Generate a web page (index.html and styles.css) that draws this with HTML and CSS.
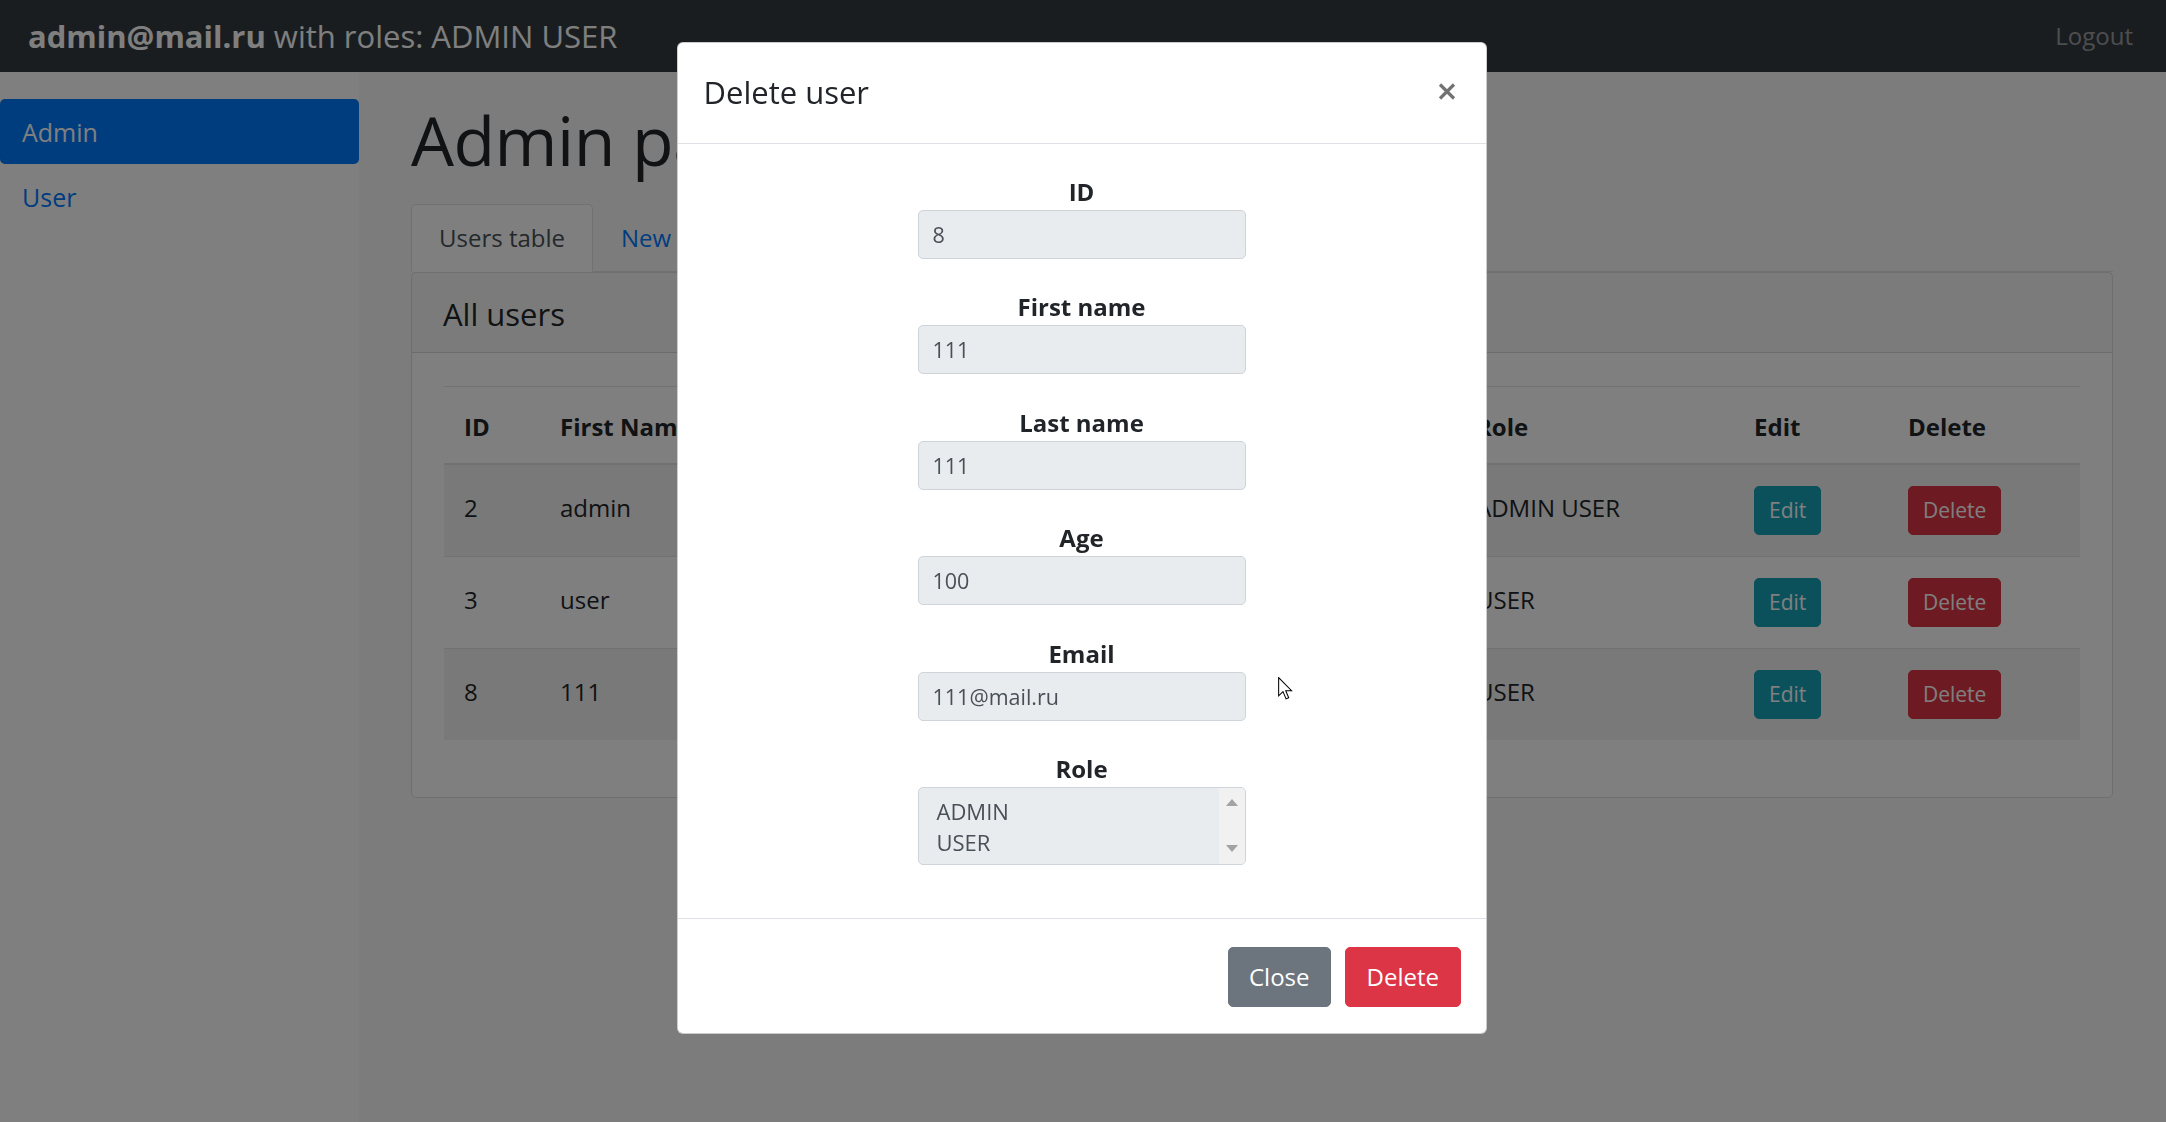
FILE: index.html
```html
<!DOCTYPE html>
<html lang="en">
<head>
<meta charset="utf-8">
<title>Admin panel</title>
<link rel="stylesheet" href="styles.css">
</head>
<body>
<nav class="topbar">
  <span class="brand"><b>admin@mail.ru</b> with roles: ADMIN USER</span>
  <a class="logout" href="#">Logout</a>
</nav>
<div class="layout">
  <aside class="sidebar">
    <a class="pill active" href="#">Admin</a>
    <a class="pill" href="#">User</a>
  </aside>
  <main class="main">
    <h1 class="page-title">Admin panel</h1>
    <div class="tabs">
      <a class="tab active" href="#">Users table</a>
      <a class="tab" href="#">New User</a>
    </div>
    <section class="card">
      <div class="card-header"><h4 class="card-title">All users</h4></div>
      <div class="card-body">
        <table class="users">
          <colgroup>
            <col class="c-id"><col class="c-first"><col class="c-last"><col class="c-age"><col class="c-email"><col class="c-role"><col class="c-edit"><col class="c-del">
          </colgroup>
          <thead>
            <tr><th>ID</th><th>First Name</th><th></th><th></th><th></th><th>Role</th><th>Edit</th><th>Delete</th></tr>
          </thead>
          <tbody>
            <tr><td>2</td><td>admin</td><td></td><td></td><td></td><td>ADMIN USER</td><td class="btn-cell"><button class="sbtn info">Edit</button></td><td class="btn-cell"><button class="sbtn danger">Delete</button></td></tr>
            <tr><td>3</td><td>user</td><td></td><td></td><td></td><td>USER</td><td class="btn-cell"><button class="sbtn info">Edit</button></td><td class="btn-cell"><button class="sbtn danger">Delete</button></td></tr>
            <tr><td>8</td><td>111</td><td></td><td></td><td></td><td>USER</td><td class="btn-cell"><button class="sbtn info">Edit</button></td><td class="btn-cell"><button class="sbtn danger">Delete</button></td></tr>
          </tbody>
        </table>
      </div>
    </section>
  </main>
</div>

<div class="backdrop"></div>

<div class="modal-wrap">
  <div class="modal">
    <div class="modal-header">
      <h5 class="modal-title">Delete user</h5>
      <button class="close" aria-label="Close">
        <svg width="18" height="17" viewBox="0 0 18 17"><path d="M2 1.5 L16 15.5 M16 1.5 L2 15.5" stroke="#000" stroke-width="3.2" fill="none"/></svg>
      </button>
    </div>
    <div class="modal-body">
      <div class="field"><label>ID</label><input class="form-control" value="8" readonly></div>
      <div class="field"><label>First name</label><input class="form-control" value="111" readonly></div>
      <div class="field"><label>Last name</label><input class="form-control" value="111" readonly></div>
      <div class="field"><label>Age</label><input class="form-control" value="100" readonly></div>
      <div class="field"><label>Email</label><input class="form-control" value="111@mail.ru" readonly></div>
      <div class="field"><label>Role</label>
        <div class="listbox" role="listbox">
          <div class="opts"><div role="option">ADMIN</div><div role="option">USER</div></div>
          <div class="scroll"><span class="arrow-up"></span><span class="arrow-down"></span></div>
        </div>
      </div>
    </div>
    <div class="modal-footer">
      <button class="btn secondary">Close</button>
      <button class="btn danger">Delete</button>
    </div>
  </div>
</div>

<svg class="cursor" width="15" height="24" viewBox="0 0 13 21"><path d="M0.5 0.5 L0.5 16.5 L4.3 12.8 L7 19.2 L9.3 18.2 L6.7 12 L11.8 12 Z" fill="#fff" stroke="#000" stroke-width="0.9" stroke-linejoin="miter"/></svg>
</body>
</html>
```
FILE: styles.css
```css
* { box-sizing: border-box; }
html, body { margin: 0; height: 100%; }
body {
  font-family: "Open Sans", "Noto Sans", sans-serif;
  font-size: 24px;
  line-height: 1.5;
  color: #212529;
  background: #fff;
  overflow: hidden;
}

/* top bar */
.topbar {
  height: 72px;
  background: #343a40;
  display: flex;
  align-items: center;
  justify-content: space-between;
  padding: 0 33px 0 28px;
}
.brand { color: #fff; font-size: 31px; white-space: nowrap; }
.brand b { font-weight: 700; }
.logout { color: rgba(255,255,255,.5); font-size: 24px; text-decoration: none; }

/* layout */
.layout { display: flex; height: calc(100% - 72px); }
.sidebar {
  width: 359px;
  flex: none;
  background: #fff;
  padding-top: 27px;
  display: flex;
  flex-direction: column;
}
.pill {
  display: block;
  padding: 16px 22px 14px;
  font-size: 25px;
  line-height: 35px;
  color: #007bff;
  text-decoration: none;
  border-radius: 5px;
}
.pill.active { background: #007bff; color: #fff; }

.main { flex: 1; background: #f8f9fa; padding: 27px 53px 0 52px; }
.page-title { margin: 0 0 23px; font-size: 68px; font-weight: 400; line-height: 1.2; letter-spacing: -0.5px; }

.tabs { display: flex; border-bottom: 1px solid #dee2e6; }
.tab {
  padding: 15px 27px;
  line-height: 36px;
  border: 1px solid transparent;
  border-radius: 5px 5px 0 0;
  margin-bottom: -1px;
  color: #007bff;
  text-decoration: none;
}
.tab.active { color: #495057; background: #fff; border-color: #dee2e6 #dee2e6 #fff; }

.card { border: 1px solid rgba(0,0,0,.125); border-radius: 5px; background: #fff; }
.card-header {
  padding: 23px 31px 20px;
  background: rgba(0,0,0,.03);
  border-bottom: 1px solid rgba(0,0,0,.125);
}
.card-title { margin: 0; font-size: 31px; font-weight: 400; line-height: 36px; }
.card-body { padding: 33px 32px; }

.users { width: 100%; table-layout: fixed; border-collapse: collapse; margin-bottom: 24px; }
.c-id { width: 96px; } .c-first { width: 220px; } .c-last { width: 230px; } .c-age { width: 120px; }
.c-email { width: 346px; } .c-role { width: 278px; } .c-edit { width: 154px; } .c-del { width: 192px; }
.users th, .users td {
  text-align: left;
  vertical-align: top;
  border-top: 1px solid #dee2e6;
  line-height: 36px;
  white-space: nowrap;
}
.users thead th { padding: 22px 20px 18px; border-bottom: 2px solid #dee2e6; font-weight: 700; }
.users tbody td { padding: 25px 20px 17px; }
.users tbody td.btn-cell { padding: 21px 20px; }
.users tbody tr:nth-child(odd) { background: rgba(0,0,0,.05); }

.sbtn {
  display: inline-block;
  vertical-align: top;
  height: 49px;
  padding: 0 14px;
  font-family: "Open Sans", sans-serif;
  font-size: 21px;
  color: #fff;
  border: 1px solid;
  border-radius: 5px;
}
.sbtn.info { background: #17a2b8; border-color: #17a2b8; }
.sbtn.danger { background: #dc3545; border-color: #dc3545; }

/* modal */
.backdrop { position: fixed; inset: 0; background: rgba(0,0,0,.5); }
.modal-wrap {
  position: fixed;
  inset: 0;
  display: flex;
  justify-content: center;
  align-items: flex-start;
  padding: 42px 3px 0 0;
}
.modal {
  width: 810px;
  background: #fff;
  border: 1px solid rgba(0,0,0,.2);
  border-radius: 6px;
}
.modal-header {
  height: 101px;
  display: flex;
  align-items: center;
  justify-content: space-between;
  padding: 0 30px 0 26px;
  border-bottom: 1px solid #dee2e6;
}
.modal-title { margin: 0; font-size: 31px; font-weight: 400; line-height: 1.2; }
.close {
  background: none;
  border: 0;
  padding: 0;
  margin-bottom: 3px;
  opacity: .55;
  display: flex;
}
.modal-body {
  padding: 30px 0 53px;
  display: flex;
  flex-direction: column;
  align-items: center;
  gap: 30.4px;
}
.field { display: flex; flex-direction: column; align-items: center; }
.field label { font-weight: 700; font-size: 24px; line-height: 36px; }
.form-control {
  width: 328px;
  height: 49px;
  padding: 0 14px;
  font-family: "Open Sans", sans-serif;
  font-size: 21.5px;
  color: #495057;
  background: #e9ecef;
  border: 1px solid #ced4da;
  border-radius: 5px;
  outline: none;
}
.listbox {
  width: 328px;
  height: 78px;
  display: flex;
  background: #e9ecef;
  border: 1px solid #ced4da;
  border-radius: 5px;
  overflow: hidden;
}
.opts { flex: 1; padding: 8px 18px; font-size: 22px; line-height: 31px; color: #495057; }
.scroll {
  width: 26px;
  background: #f1f1f1;
  display: flex;
  flex-direction: column;
  justify-content: space-between;
  align-items: center;
  padding: 11px 0 11.5px;
}
.arrow-up { width: 0; height: 0; border-left: 6px solid transparent; border-right: 6px solid transparent; border-bottom: 7px solid #a3a3a3; }
.arrow-down { width: 0; height: 0; border-left: 6px solid transparent; border-right: 6px solid transparent; border-top: 7px solid #a3a3a3; }

.modal-footer {
  height: 115px;
  display: flex;
  justify-content: flex-end;
  align-items: center;
  gap: 14px;
  padding: 2px 25px 0;
  border-top: 1px solid #dee2e6;
}
.btn {
  height: 60px;
  padding: 0 20.5px;
  font-family: "Open Sans", sans-serif;
  font-size: 24px;
  color: #fff;
  border: 1px solid;
  border-radius: 5px;
}
.btn.secondary { background: #6c757d; border-color: #6c757d; }
.btn.danger { background: #dc3545; border-color: #dc3545; }

.cursor { position: fixed; left: 1278px; top: 677px; }
```
